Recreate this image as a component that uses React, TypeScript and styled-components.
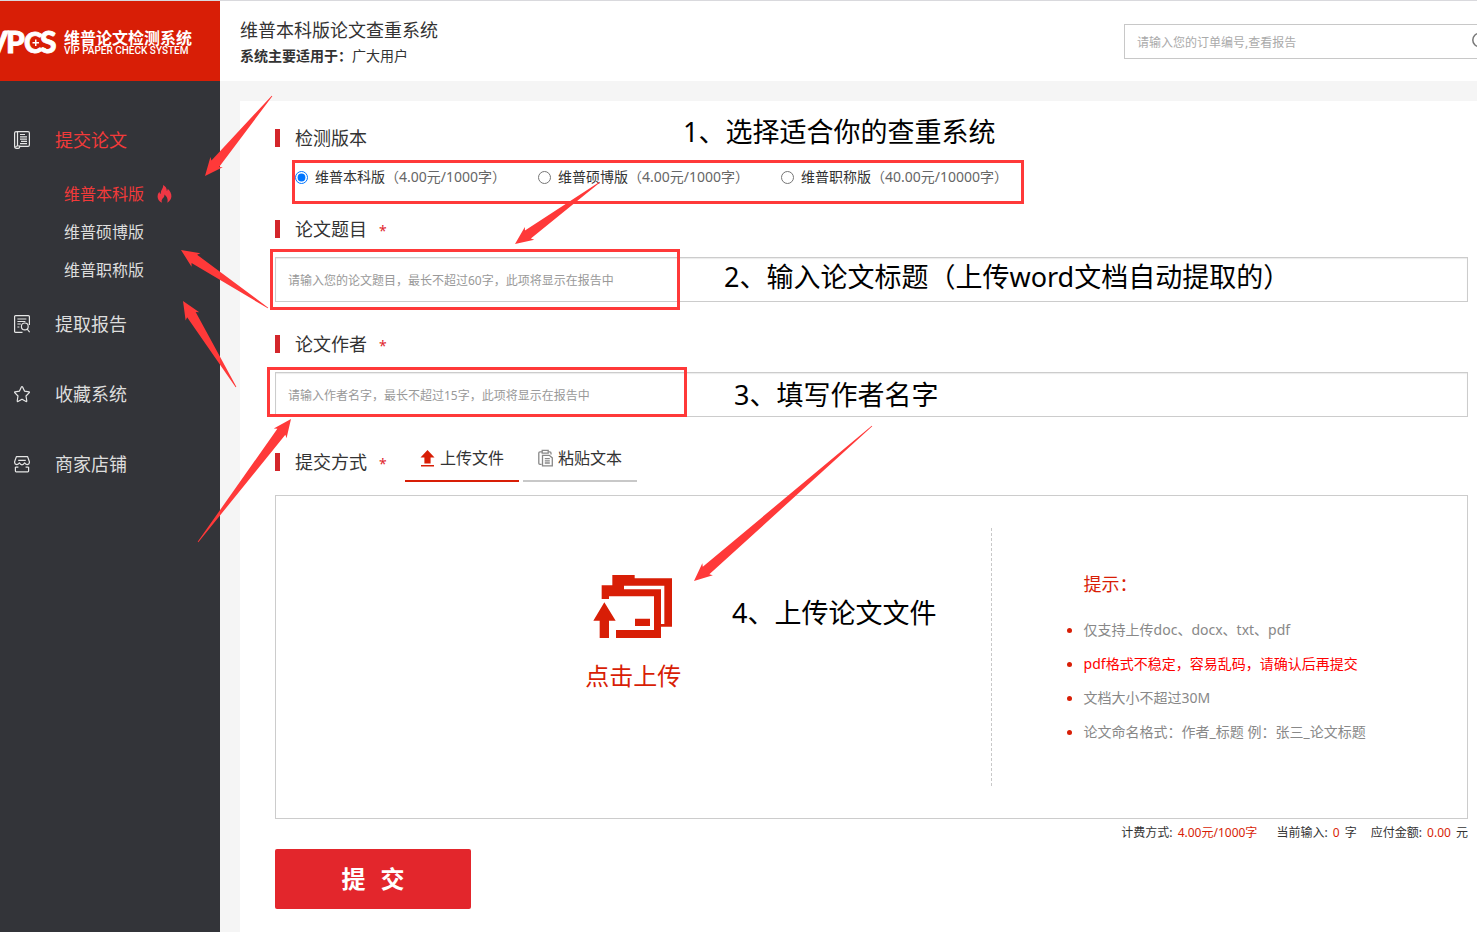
import React, { useState } from "react";
import styled, { createGlobalStyle } from "styled-components";

const brand = "#d81e06";
const markRed = "#ff3939";

const GlobalStyle = createGlobalStyle`
  *, *::before, *::after { box-sizing: border-box; }
  body {
    margin: 0;
    background: #f5f5f5;
    color: #333;
    font-family: "Noto Sans", "Noto Sans CJK SC", sans-serif;
    font-size: 14px;
    line-height: 20px;
  }
  button, input { font: inherit; }
  h1, h2, h3, p, ul { margin: 0; padding: 0; font-weight: 400; }
  ul { list-style: none; }
`;

const Page = styled.div`
  position: relative;
  display: flex;
  min-height: 100vh;
  border-top: 1px solid #d9d9dd;
  overflow: hidden;
`;

const Sidebar = styled.aside`
  flex: none;
  width: 220px;
  background: #333439;
`;

const Logo = styled.a`
  display: flex;
  align-items: center;
  height: 80px;
  overflow: hidden;
  background: ${brand};
  color: #fff;
  text-decoration: none;
`;

const LogoMark = styled.svg`
  flex: none;
  width: 64px;
  height: 36px;
`;

const LogoName = styled.span`
  display: flex;
  flex-direction: column;
  padding-top: 4px;
  font-size: 16px;
  font-weight: 700;
  line-height: 16px;
  white-space: nowrap;
`;

const LogoLatin = styled.small`
  font-family: Roboto, sans-serif;
  font-size: 10px;
  font-weight: 500;
  line-height: 10px;
`;

const Nav = styled.nav`
  padding-top: 24px;
`;

const NavLink = styled.a<{ $active?: boolean }>`
  display: flex;
  align-items: center;
  gap: 25px;
  height: 70px;
  padding-left: 14px;
  color: ${(p) => (p.$active ? "#f23a3a" : "#ddd")};
  font-size: 18px;
  text-decoration: none;

  svg {
    flex: none;
    width: 16px;
    height: 18px;
    color: #e6e6e6;
  }
`;

const SubLink = styled.a<{ $active?: boolean }>`
  display: flex;
  align-items: center;
  gap: 13px;
  height: 38px;
  padding-left: 64px;
  color: ${(p) => (p.$active ? "#f23a3a" : "#ddd")};
  font-size: 16px;
  text-decoration: none;
`;

const Main = styled.div`
  display: flex;
  flex: 1;
  flex-direction: column;
  min-width: 0;
`;

const Header = styled.header`
  display: flex;
  align-items: center;
  justify-content: space-between;
  height: 80px;
  padding-left: 20px;
  overflow: hidden;
  background: #fff;
`;

const Heads = styled.div`
  padding-top: 2px;
`;

const Title = styled.h1`
  font-size: 18px;
  line-height: 28px;
`;

const Subtitle = styled.p`
  font-size: 14px;
  line-height: 24px;
`;

const SearchBox = styled.form`
  display: flex;
  flex: none;
  align-items: center;
  width: 366px;
  height: 35px;
  margin-right: -13px;
  border: 1px solid #c8c8c8;
`;

const SearchInput = styled.input`
  flex: 1;
  min-width: 0;
  padding: 3px 12px 0;
  border: 0;
  outline: 0;
  background: none;
  font-size: 12px;
  &::placeholder { color: #aaa; }
`;

const SearchButton = styled.button`
  display: flex;
  padding: 0;
  border: 0;
  background: none;
  color: #777;
`;

const Panel = styled.form`
  flex: 1;
  margin: 20px 0 0 20px;
  padding: 19px 9px 20px 35px;
  background: #fff;
`;

const Heading = styled.h2`
  display: flex;
  align-items: center;
  height: 36px;
  font-size: 18px;

  &::before {
    content: "";
    width: 5px;
    height: 18px;
    margin-right: 15px;
    background: #d3262b;
  }
`;

const Required = styled.span`
  margin-left: 12px;
  color: #e0262b;
  font-size: 14px;
  line-height: 12px;
  padding-top: 4px;
`;

const Versions = styled.div`
  display: flex;
  gap: 32px;
  height: 42px;
  margin-bottom: 13px;
  padding-left: 20px;
`;

const Version = styled.label`
  display: flex;
  align-items: center;

  input {
    width: 13px;
    height: 13px;
    margin: 0 7px 0 0;
  }
`;

const Price = styled.span`
  color: #666;
`;

const TextField = styled.input`
  display: block;
  width: 100%;
  height: 45px;
  margin: 10px 0 24px;
  padding: 2px 12px 0;
  border: 1px solid #ccc;
  outline: 0;
  box-shadow: inset 0 1px 1px rgba(0, 0, 0, 0.08);
  font-size: 12px;
  &::placeholder { color: #999; }
`;

const MethodRow = styled.div`
  display: flex;
  align-items: flex-end;
  height: 46px;
  margin: -5px 0 13px;

  ${Heading} {
    width: 130px;
    height: 40px;
  }
`;

const Tabs = styled.div`
  display: flex;
  gap: 4px;
`;

const Tab = styled.button<{ $active: boolean }>`
  display: flex;
  align-items: center;
  justify-content: center;
  gap: 5px;
  width: 114px;
  height: 46px;
  padding: 0;
  border: 0;
  border-bottom: 2px solid ${(p) => (p.$active ? brand : "#c8c8c8")};
  background: none;
  color: #333;
  font-size: 16px;
`;

const UploadBox = styled.div`
  display: grid;
  grid-template-columns: 3fr 2fr;
  height: 324px;
  padding: 32px 0;
  border: 1px solid #ccc;
`;

const UploadButton = styled.button`
  display: flex;
  flex-direction: column;
  align-items: center;
  justify-content: center;
  gap: 20px;
  padding: 0 0 46px;
  border: 0;
  background: none;
  color: ${brand};
  font-size: 24px;
  line-height: 36px;
`;

const Tips = styled.div`
  padding: 40px 0 0 92px;
  border-left: 1px dashed #c8c8c8;
`;

const TipsTitle = styled.h3`
  color: ${brand};
  font-size: 18px;
  line-height: 32px;
  margin-bottom: 13px;
`;

const Tip = styled.li<{ $warn?: boolean }>`
  display: flex;
  align-items: center;
  height: 34px;
  margin-left: -17px;
  color: ${(p) => (p.$warn ? "#f00" : "#888")};
  white-space: nowrap;

  &::before {
    content: "";
    width: 5px;
    height: 5px;
    margin-right: 12px;
    border-radius: 50%;
    background: ${brand};
  }
`;

const Billing = styled.div`
  display: flex;
  justify-content: flex-end;
  gap: 14px;
  margin: 4px 0 6px;
  font-size: 12px;

  span:first-child { margin-right: 3px; }
  em {
    margin: 0 2px;
    color: ${brand};
    font-style: normal;
  }
`;

const Submit = styled.button`
  width: 196px;
  height: 60px;
  border: 0;
  border-radius: 2px;
  background: #e3262c;
  color: #fff;
  font-size: 24px;
  font-weight: 700;
  span + span { margin-left: 15px; }
`;

const Marks = styled.svg`
  position: absolute;
  top: -1px;
  left: 0;
  pointer-events: none;
`;

const Note = styled.p<{ $x: number; $y: number }>`
  position: absolute;
  left: ${(p) => p.$x}px;
  top: ${(p) => p.$y}px;
  color: #000;
  font-size: 27px;
  line-height: 40px;
  white-space: nowrap;
  pointer-events: none;
`;

type Point = [number, number];

const arrows: { tail: Point; tip: Point }[] = [
  { tail: [272, 96], tip: [205, 176] },
  { tail: [268, 308], tip: [181, 250] },
  { tail: [236, 387], tip: [183, 301] },
  { tail: [600, 182], tip: [515, 244] },
  { tail: [198, 542], tip: [291, 419] },
  { tail: [872, 426], tip: [694, 581] },
];

/* Tapered arrow: a point at the tail that widens towards the head. */
function arrowPoints(tail: Point, tip: Point) {
  const dx = tail[0] - tip[0];
  const dy = tail[1] - tip[1];
  const len = Math.hypot(dx, dy);
  const at = (along: number, side: number) =>
    `${tip[0] + (dx * along - dy * side) / len},${tip[1] + (dy * along + dx * side) / len}`;
  return [at(0, 0), at(18, 8), at(16, 5), at(len, 0.4), at(len, -0.4), at(16, -5), at(18, -8)].join(" ");
}

const notes = [
  { x: 683, y: 111, text: "1、选择适合你的查重系统" },
  { x: 724, y: 256, text: "2、输入论文标题（上传word文档自动提取的）" },
  { x: 734, y: 374, text: "3、填写作者名字" },
  { x: 732, y: 592, text: "4、上传论文文件" },
];

const versions = [
  { id: "bk", name: "维普本科版", price: "（4.00元/1000字）" },
  { id: "sb", name: "维普硕博版", price: "（4.00元/1000字）" },
  { id: "zc", name: "维普职称版", price: "（40.00元/10000字）" },
];

const line = { fill: "none", stroke: "currentColor", strokeWidth: 1.2 };

const PaperIcon = () => (
  <svg viewBox="0 0 16 18" {...line}>
    <path d="M3.5 15V1.6q0-1-1.4-1H14q1.4 0 1.4 1.4v12q0 1.4-1.4 1.4H5.6" />
    <path d="M2.2.6Q.6.6.6 2v13.6q0 1.800 2 1.800h1.600q1.400 0 1.400-1.400v-1H3q-1.200 0-1.200 1.200" />
    <path d="M6 3.500h5M6 5.800h7M6 8.100h7M7 10.400h6M6 12.700h7" />
  </svg>
);

const ReportIcon = () => (
  <svg viewBox="0 0 16 18" {...line}>
    <path d="M8.500 17.400H1.600q-1 0-1-1V1.600q0-1 1-1h12.800q1 0 1 1V10" />
    <path d="M3.400 4h9M3.400 6.500h8M3.400 9h3.400M3.400 12h2" />
    <circle cx="10.800" cy="11.400" r="3.400" />
    <path d="M13.200 14l2.400 3.200" />
  </svg>
);

const StarIcon = () => (
  <svg viewBox="0 0 16 18" {...line} strokeLinejoin="round">
    <path d="M8 1.500q.4 0 .6.400l1.900 4.200 4.500.7q.8.200.3.800l-3.300 3.400.8 5q0 .8-.7.500L8 14.200l-4.100 2.300q-.7.300-.7-.5l.8-5L.7 7.600q-.5-.6.3-.8l4.500-.7 1.900-4.200q.2-.4.6-.4z" />
  </svg>
);

const ShopIcon = () => (
  <svg viewBox="0 0 16 18" {...line} strokeLinejoin="round">
    <path d="M2.400 1.600h11.200l1.800 5.200q.2 2.600-2.200 2.800-1.800 0-2.600-1.800Q9.600 9.800 8 9.800T5.400 7.800Q4.600 9.600 2.800 9.600.4 9.400.6 6.800z" />
    <path d="M4.200 5.400h7.600M1.400 12v4q0 .8.800.8h11.600q.8 0 .8-.8v-4M1.400 12.200h3M11.600 12.200h3" />
  </svg>
);

const FlameIcon = () => (
  <svg width="15" height="18" viewBox="0 0 15 18" fill="#ef3744">
    <path d="M6.200 0Q10 2.200 9.800 6q1-.6.900-2.200Q14.600 7.400 14.400 11.600 14 15.600 10.200 17.800 11.800 13.600 7.600 9.400 7.600 11.600 5.800 13.200T4.800 17.800Q.4 15.600.6 11.200.8 8.600 2.400 6.800q.200 1.700 1.200 2.200Q3.400 6.200 5 4.200 6.400 2.400 6.200 0z" />
  </svg>
);

const UploadIcon = () => (
  <svg width="15" height="18" viewBox="0 0 15 18" fill={brand}>
    <path d="M7.500 1L14.500 8.500h-3.900V14.500H4.400V8.500H.5zM1 16h13v1.400H1z" />
  </svg>
);

const PasteIcon = () => (
  <svg width="15" height="18" viewBox="0 0 15 18" fill="none" stroke="#888" strokeWidth="1.300">
    <path d="M3.600 15.300H2q-1.200 0-1.200-1.200V4Q.8 2.800 2 2.800h2M10.600 2.800h1.200q1.200 0 1.200 1.200v1.500" />
    <path d="M4.200 1.400h6v2.800h-6zM4.500 6.300h6.800l3 2.600v8H4.500z" />
    <path d="M6.800 9.600h5M6.800 11.800h5M6.800 14h5" />
  </svg>
);

const FolderUploadIcon = () => (
  <svg width="80" height="64" viewBox="0 0 240 192" fill="currentColor">
    <path
      fillRule="evenodd"
      d="M58 3H125V13H237V158H204V192H69V168H183V67H48V75H26V34H58ZM93 35V46H204V150H214V35Z"
    />
    <path d="M126 134h45v22h-45zM34 85L68 140H48V192H20V140H1Z" />
  </svg>
);

export default function App() {
  const [version, setVersion] = useState("bk");
  const [method, setMethod] = useState("file");

  return (
    <>
      <GlobalStyle />
      <Page>
        <Sidebar>
          <Logo href="#">
            <LogoMark viewBox="0 0 64 36">
              <g fill="#fff" stroke="#fff" strokeWidth="0.8" fontFamily="Lato, sans-serif" fontSize="30" fontWeight="900">
                <text x="-13" y="30">V</text>
                <text x="6" y="30">P</text>
                <text x="24" y="30" fontSize="28">C</text>
                <text x="40" y="30">S</text>
              </g>
              <path fill="#fff" d="M35 16.500h1.500v2.500H39v1.500h-2.500V23H35v-2.500h-2.500V19H35z" />
            </LogoMark>
            <LogoName>
              维普论文检测系统
              <LogoLatin>VIP PAPER CHECK SYSTEM</LogoLatin>
            </LogoName>
          </Logo>
          <Nav>
            <NavLink href="#submit" $active><PaperIcon />提交论文</NavLink>
            <SubLink href="#bk" $active>维普本科版<FlameIcon /></SubLink>
            <SubLink href="#sb">维普硕博版</SubLink>
            <SubLink href="#zc">维普职称版</SubLink>
            <NavLink href="#report"><ReportIcon />提取报告</NavLink>
            <NavLink href="#favorite"><StarIcon />收藏系统</NavLink>
            <NavLink href="#shop"><ShopIcon />商家店铺</NavLink>
          </Nav>
        </Sidebar>

        <Main>
          <Header>
            <Heads>
              <Title>维普本科版论文查重系统</Title>
              <Subtitle><b>系统主要适用于：</b>广大用户</Subtitle>
            </Heads>
            <SearchBox onSubmit={(e) => e.preventDefault()}>
              <SearchInput aria-label="订单编号" placeholder="请输入您的订单编号,查看报告" />
              <SearchButton aria-label="查看报告">
                <svg width="18" height="18" viewBox="0 0 18 18" fill="none" stroke="currentColor" strokeWidth="1.500">
                  <circle cx="8.500" cy="8" r="6.700" />
                  <path d="M13.500 13l4 4.500" />
                </svg>
              </SearchButton>
            </SearchBox>
          </Header>

          <Panel onSubmit={(e) => e.preventDefault()}>
            <Heading>检测版本</Heading>
            <Versions>
              {versions.map((v) => (
                <Version key={v.id}>
                  <input
                    type="radio"
                    name="version"
                    checked={version === v.id}
                    onChange={() => setVersion(v.id)}
                  />
                  {v.name}
                  <Price>{v.price}</Price>
                </Version>
              ))}
            </Versions>

            <Heading>
              <label htmlFor="paper-title">论文题目</label>
              <Required>*</Required>
            </Heading>
            <TextField id="paper-title" placeholder="请输入您的论文题目，最长不超过60字，此项将显示在报告中" />

            <Heading>
              <label htmlFor="paper-author">论文作者</label>
              <Required>*</Required>
            </Heading>
            <TextField id="paper-author" placeholder="请输入作者名字，最长不超过15字，此项将显示在报告中" />

            <MethodRow>
              <Heading>
                提交方式
                <Required>*</Required>
              </Heading>
              <Tabs>
                <Tab type="button" $active={method === "file"} onClick={() => setMethod("file")}>
                  <UploadIcon />上传文件
                </Tab>
                <Tab type="button" $active={method === "text"} onClick={() => setMethod("text")}>
                  <PasteIcon />粘贴文本
                </Tab>
              </Tabs>
            </MethodRow>

            <UploadBox>
              <UploadButton type="button">
                <FolderUploadIcon />
                点击上传
              </UploadButton>
              <Tips>
                <TipsTitle>提示：</TipsTitle>
                <ul>
                  <Tip>仅支持上传doc、docx、txt、pdf</Tip>
                  <Tip $warn>pdf格式不稳定，容易乱码，请确认后再提交</Tip>
                  <Tip>文档大小不超过30M</Tip>
                  <Tip>论文命名格式：作者_标题 例：张三_论文标题</Tip>
                </ul>
              </Tips>
            </UploadBox>

            <Billing>
              <span>计费方式: <em>4.00元/1000字</em></span>
              <span>当前输入: <em>0</em> 字</span>
              <span>应付金额: <em>0.00</em> 元</span>
            </Billing>

            <Submit><span>提</span><span>交</span></Submit>
          </Panel>
        </Main>

        <Marks width="1100" height="620" viewBox="0 0 1100 620" aria-hidden="true">
          <g fill="none" stroke={markRed} strokeWidth="3">
            <rect x="293.500" y="161.500" width="729" height="41" />
            <rect x="271.500" y="250.500" width="407" height="58" />
            <rect x="268.500" y="368.500" width="417" height="47" />
          </g>
          {arrows.map((a) => (
            <polygon key={a.tip.join()} points={arrowPoints(a.tail, a.tip)} fill={markRed} />
          ))}
        </Marks>
        {notes.map((n) => (
          <Note key={n.text} $x={n.x} $y={n.y}>{n.text}</Note>
        ))}
      </Page>
    </>
  );
}
